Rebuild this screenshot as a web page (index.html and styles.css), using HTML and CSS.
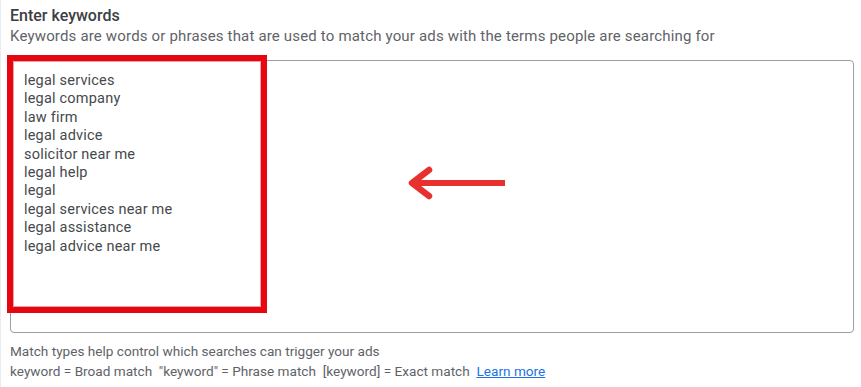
FILE: index.html
```html
<!DOCTYPE html>
<html lang="en">
<head>
<meta charset="utf-8">
<title>Enter keywords</title>
<link rel="stylesheet" href="styles.css">
</head>
<body>
<div class="panel">
  <div class="title">Enter keywords</div>
  <div class="subtitle">Keywords are words or phrases that are used to match your ads with the terms people are searching for</div>
  <div class="field">
    <div class="keywords">
      <div>legal services</div>
      <div>legal company</div>
      <div>law firm</div>
      <div>legal advice</div>
      <div>solicitor near me</div>
      <div>legal help</div>
      <div>legal</div>
      <div>legal services near me</div>
      <div>legal assistance</div>
      <div>legal advice near me</div>
    </div>
    <div class="highlight"></div>
    <svg class="arrow" width="110" height="40" viewBox="0 0 110 40">
      <path d="M104 20 H10" stroke="#e8302e" stroke-width="6" fill="none"/>
      <path d="M28 7 L11 20 L28 33" stroke="#e8302e" stroke-width="6.5" fill="none" stroke-linecap="round" stroke-linejoin="round"/>
    </svg>
  </div>
  <div class="hint">
    <div>Match types help control which searches can trigger your ads</div>
    <div>keyword = Broad match&nbsp;&nbsp;"keyword" = Phrase match&nbsp;&nbsp;[keyword] = Exact match&nbsp;&nbsp;<a class="learn" href="#">Learn more</a></div>
  </div>
</div>
</body>
</html>
```
FILE: styles.css
```css
html, body {
  margin: 0;
  padding: 0;
  background: #ffffff;
}
body {
  font-family: Roboto, "Noto Sans", Arial, sans-serif;
  color: #3c4043;
}
.panel {
  padding: 5px 7px 0 9px;
  border-left: 1px solid #ececec;
  min-height: 387px;
  box-sizing: border-box;
}
.title {
  font-size: 16px;
  font-weight: 500;
  line-height: 21px;
  color: #3c4043;
}
.subtitle {
  font-size: 15px;
  line-height: 21px;
  color: #5f6368;
  letter-spacing: 0.17px;
}
.field {
  position: relative;
  margin-top: 13px;
  height: 271px;
  border: 1px solid #9aa0a6;
  border-radius: 4px;
}
.keywords {
  padding: 11px 13px 9px;
  font-size: 14.5px;
  line-height: 18.4px;
  letter-spacing: 0.2px;
  color: #45494d;
}
.highlight {
  position: absolute;
  left: -4px;
  top: -6px;
  width: 248px;
  height: 246px;
  border: 6px solid #e60611;
  box-shadow: inset 0 0 0 1px #f4a0a3;
}
.arrow {
  position: absolute;
  left: 390px;
  top: 102px;
}
.hint {
  margin-top: 8px;
  font-size: 13.6px;
  line-height: 20px;
  color: #5f6368;
}
.learn {
  color: #1a73e8;
  text-decoration: underline;
}
```
